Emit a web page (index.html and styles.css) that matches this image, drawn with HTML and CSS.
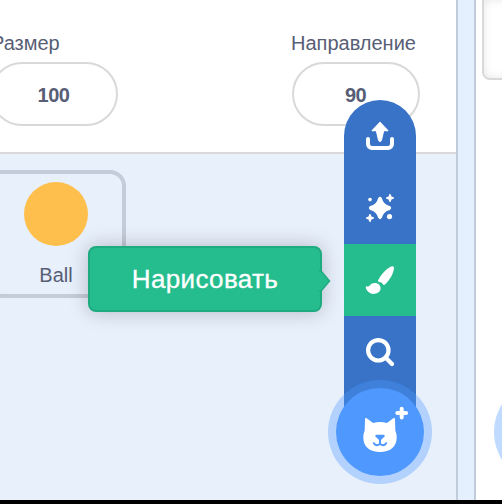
FILE: index.html
```
<!DOCTYPE html>
<html lang="ru">
<head>
<meta charset="utf-8">
<title>Scratch</title>
<link rel="stylesheet" href="styles.css">
</head>
<body>
<div class="app">
  <main class="workspace">
    <section class="targets">
      <div class="sprite-info">
        <label class="field"><span class="field-label size">Размер</span><span class="field-input">100</span></label>
        <label class="field"><span class="field-label direction">Направление</span><span class="field-input">90</span></label>
      </div>
      <div class="sprite-list">
        <div class="sprite">
          <div class="ball"></div>
          <span class="sprite-name">Ball</span>
        </div>
      </div>
    </section>
    <div class="divider"></div>
    <aside class="stage-pane">
      <div class="stage-thumb"></div>
      <div class="stage-add"></div>
    </aside>
  </main>
  <footer class="bottom-bar"></footer>

  <div class="action-menu">
    <div class="menu-items">
      <svg class="item" viewBox="0 0 72 72"><path d="M36 22.4 L43.8 30.7 H39.6 L37.4 40 Q36 42.6 34.6 40 L32.4 30.7 H28.2 Z" fill="#fff" stroke="#fff" stroke-width="1.2" stroke-linejoin="round"/><path d="M24 39v5a4 4 0 0 0 4 4h16a4 4 0 0 0 4-4v-5" fill="none" stroke="#fff" stroke-width="4" stroke-linecap="round"/></svg>
      <svg class="item" viewBox="0 0 72 72" fill="#fff"><path d="M34.1 26.2Q36 23.4 37.900 26.2Q39.400 32.600 45.8 34.1Q48.600 36 45.800 37.900Q39.400 39.400 37.900 45.800Q36 48.600 34.100 45.800Q32.600 39.400 26.200 37.900Q23.400 36 26.200 34.100Q32.600 32.600 34.100 26.200Z"/><path d="M46 22q.9 0 1 1.200l.5 1.300 1.300.5q1.200.1 1.200 1t-1.200 1l-1.300.5-.5 1.300q-.1 1.200-1 1.200t-1-1.200l-.5-1.300-1.300-.5Q42 26.900 42 26t1.200-1l1.300-.5.5-1.300Q45.100 22 46 22Z"/><path transform="translate(-20 20)" d="M46 22q.9 0 1 1.200l.5 1.300 1.300.5q1.200.1 1.200 1t-1.200 1l-1.300.5-.5 1.300q-.1 1.200-1 1.200t-1-1.200l-.5-1.300-1.300-.5Q42 26.900 42 26t1.200-1l1.300-.5.5-1.300Q45.100 22 46 22Z"/><circle cx="26" cy="27.600" r="1.800"/><circle cx="45.500" cy="44.600" r="2.600"/></svg>
      <svg class="item active" viewBox="0 0 72 72" fill="#fff"><path d="M34 36.600C37 30.500 41 26 46 23Q50.200 20.800 50 24.500C49 31 45.500 36 41.200 40.300Q39.700 41.600 38.800 40Q37.700 38.200 35.200 38.100Q33.500 37.900 34 36.600Z"/><path d="M22.500 42.200Q24.500 43.200 26 41.200C28 38.500 32.500 38.200 35 40.500C37.300 42.800 37.200 46.500 34.300 48.600C30.500 51 24.800 50.200 22.600 45.800Q21 42.600 22.500 42.200Z"/></svg>
      <svg class="item" viewBox="0 0 72 72" fill="none" stroke="#fff" stroke-width="4.200" stroke-linecap="round"><circle cx="34.300" cy="34.300" r="10.200"/><path d="M42 42l6 6"/></svg>
    </div>
    <svg class="main-button" viewBox="0 0 88 88"><path d="M29 31Q29 29.200 30.700 30.300L37 35Q44 33 51 35L57.300 30.300Q59 29.200 59 31L59.300 42.500Q60.700 45.500 60.700 49.500C60.700 59 54 64 44 64S27.300 59 27.300 49.500Q27.300 45.500 28.700 42.500Z" fill="#fff"/><path d="M40.500 46.800h7q2 .2.8 1.900L45.500 51.500q-1.500 1-3 0L39.700 48.700q-1.200-1.700.8-1.900Z" fill="#4c97ff"/><path d="M44 51v4.500M37.800 55.200c1.200 2.600 5 2.600 6.200.2 1.200 2.400 5 2.400 6.200-.2" fill="none" stroke="#4c97ff" stroke-width="2" stroke-linecap="round"/><path d="M65.700 20.700v8.800M61.300 25.100h8.800" stroke="#fff" stroke-width="4" stroke-linecap="round"/></svg>
    <div class="tooltip">Нарисовать<svg class="arrow" viewBox="0 0 14 24"><path d="M1 1h2L12.500 12 3 23H1Z" fill="#25bd8e"/><path d="M2 2h2l8.500 10L4 22H2" fill="none" stroke="#1eab80" stroke-width="1.500"/></svg></div>
  </div>
</div>
</body>
</html>
```
FILE: styles.css
```
* { box-sizing: border-box; }
body {
  margin: 0;
  font-family: "Liberation Sans", sans-serif;
  color: #575e75;
}
.app {
  position: relative;
  display: flex;
  flex-direction: column;
  width: 502px;
  height: 504px;
  overflow: hidden;
}
.workspace { display: flex; flex: 1; min-height: 0; }
.targets {
  display: flex;
  flex-direction: column;
  width: 458px;
  border-right: 2px solid #c1ccdb;
  background: #e8f0fc;
}
.sprite-info {
  display: flex;
  justify-content: space-between;
  height: 154px;
  padding: 32px 36px 0 0;
  margin-left: -10px;
  background: #fff;
  border-bottom: 2px solid #d9d9d9;
}
.field { display: flex; flex-direction: column; width: 128px; }
.field-label {
  height: 30px;
  line-height: 23px;
  font-size: 20px;
  white-space: nowrap;
}
.field-label.size { padding-left: 1px; }
.field-label.direction { margin-left: -1px; }
.field-input {
  height: 64px;
  border: 2px solid #d9d9d9;
  border-radius: 32px;
  font-size: 20px;
  font-weight: bold;
  line-height: 62px;
  letter-spacing: -.5px;
  padding-right: 1px;
  text-align: center;
}
.sprite-list { padding-top: 16px; }
.sprite {
  display: flex;
  flex-direction: column;
  align-items: center;
  width: 140px;
  height: 128px;
  margin-left: -14px;
  padding-top: 8px;
  border: 4px solid #c4ccd9;
  border-radius: 16px;
}
.ball { width: 64px; height: 64px; border-radius: 50%; background: #ffbf4c; }
.sprite-name { margin-top: 17px; font-size: 20px; line-height: 24px; }
.divider {
  flex: none;
  width: 18px;
  border-right: 2px solid #c1ccdb;
  background: #e5f0ff;
}
.stage-pane { flex: 1; padding-left: 6px; background: #fff; overflow: hidden; }
.stage-thumb {
  width: 60px;
  height: 80px;
  border: 2px solid #d9d9d9;
  border-top: 0;
  border-radius: 0 0 8px 8px;
  box-shadow: inset 0 0 10px rgba(0, 0, 0, .1);
}
.stage-add {
  width: 104px;
  height: 104px;
  margin: 300px 0 0 12px;
  border-radius: 50%;
  background: #c0dbff;
}
.bottom-bar { flex: none; height: 4px; background: #000; }
.action-menu {
  position: absolute;
  left: 336px;
  top: 100px;
  display: flex;
  flex-direction: column;
  align-items: center;
  width: 88px;
}
.menu-items {
  width: 72px;
  height: 332px;
  border-radius: 36px 36px 0 0;
  background: #3873c7;
  overflow: hidden;
}
.item { display: block; width: 72px; height: 72px; }
.item.active { background: #25bd8e; }
.main-button {
  width: 88px;
  height: 88px;
  margin-top: -44px;
  border-radius: 50%;
  background: #4f98fe;
  box-shadow: 0 0 0 8px rgba(76, 151, 255, .35);
}
.tooltip {
  position: absolute;
  left: -248px;
  top: 146px;
  width: 234px;
  height: 66px;
  border: 2px solid #1eab80;
  border-radius: 8px;
  background: #25bd8e;
  box-shadow: 0 0 20px rgba(0, 0, 0, .23);
  color: #fff;
  font-size: 26px;
  letter-spacing: .35px;
  line-height: 62px;
  text-align: center;
  -webkit-text-stroke: .3px #fff;
}
.arrow { position: absolute; right: -11px; top: 21px; width: 14px; height: 24px; }
```
